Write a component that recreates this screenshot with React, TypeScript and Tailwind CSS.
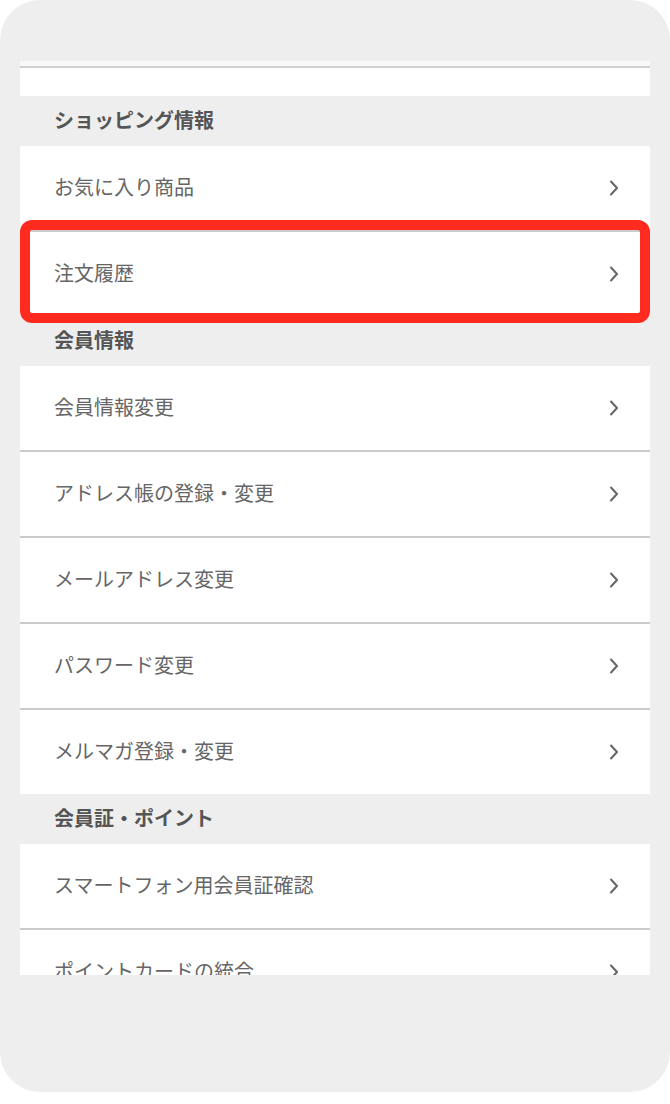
import React from "react";

const font = { fontFamily: '"Noto Sans CJK JP", "Noto Sans", sans-serif' };

function Chevron() {
  return (
    <svg width="10" height="16" viewBox="0 0 10 16" className="shrink-0">
      <path d="M2 1.5 L8 8 L2 14.5" fill="none" stroke="#666666" strokeWidth="2" strokeLinecap="round" strokeLinejoin="round" />
    </svg>
  );
}

function Row({ label, highlight }: { label: string; highlight?: boolean }) {
  return (
    <div className="relative h-[84px] bg-white flex items-center justify-between pl-[34px] pr-[31px]">
      <span className="text-[20px] text-[#666666] leading-none pb-[2px]">{label}</span>
      <Chevron />
      {highlight && (
        <div className="absolute left-0 right-0 top-[-12px] bottom-[-7px] border-[10px] border-[#fe2b1e] rounded-[12px] pointer-events-none" />
      )}
    </div>
  );
}

function Divider() {
  return <div className="h-[2px] bg-[#cbcbcb]" />;
}

function Header({ label }: { label: string }) {
  return (
    <div className="h-[50px] flex items-center pl-[34px]">
      <span className="text-[20px] font-bold text-[#555555] leading-none pb-[3px]">{label}</span>
    </div>
  );
}

function Section({ title, items, highlightIndex }: { title: string; items: string[]; highlightIndex?: number }) {
  return (
    <div>
      <Header label={title} />
      <div className="flex flex-col">
        {items.map((it, i) => (
          <React.Fragment key={it}>
            {i > 0 && <Divider />}
            <Row label={it} highlight={i === highlightIndex} />
          </React.Fragment>
        ))}
      </div>
    </div>
  );
}

export default function App() {
  return (
    <div className="w-[670px] h-[1104px] bg-white" style={font}>
      <div className="h-[1092px] rounded-[40px] bg-[#eeeeee] pt-[61px] px-[20px]">
        <div className="h-[914px] overflow-hidden">
          <div className="h-[5px] bg-[#f6f8fa]" />
          <div className="h-[2px] bg-[#cfcfcf]" />
          <div className="h-[28px] bg-white" />
          <Section title="ショッピング情報" items={["お気に入り商品", "注文履歴"]} highlightIndex={1} />
          <Section
            title="会員情報"
            items={["会員情報変更", "アドレス帳の登録・変更", "メールアドレス変更", "パスワード変更", "メルマガ登録・変更"]}
          />
          <Section title="会員証・ポイント" items={["スマートフォン用会員証確認", "ポイントカードの統合"]} />
        </div>
      </div>
    </div>
  );
}
